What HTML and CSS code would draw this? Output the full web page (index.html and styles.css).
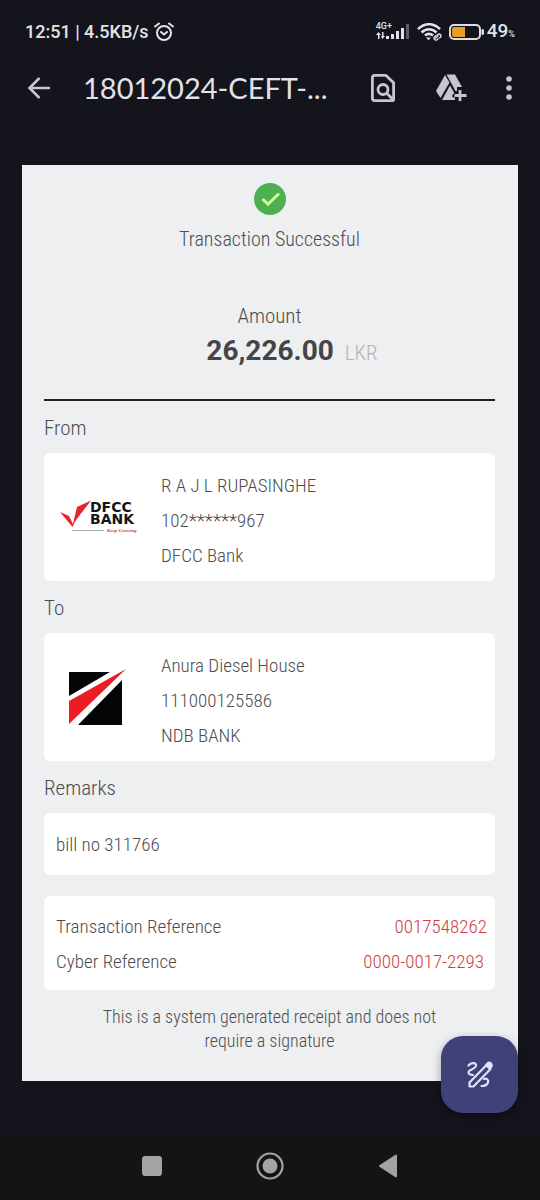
FILE: index.html
```html
<!DOCTYPE html>
<html lang="en">
<head>
<meta charset="utf-8">
<meta name="viewport" content="width=device-width, initial-scale=1">
<title>18012024-CEFT</title>
<link rel="stylesheet" href="styles.css">
</head>
<body>
<div class="status">
  <span class="status-text">12:51 | 4.5KB/s</span>
  <svg class="alarm" width="20" height="20" viewBox="0 0 20 20" fill="none" stroke="currentColor" stroke-width="2" stroke-linecap="round"><circle cx="10" cy="11" r="7"/><path d="M7 10l3 2.500 3-2.500M1 4.500L5 1.500M19 4.500L15 1.500"/></svg>
  <span class="status-right">
    <span class="signal">
      <span class="network">4G+</span>
      <svg width="34" height="16" viewBox="0 0 34 16" fill="currentColor"><path d="M2.500 8L5 11H3.500v4H2v-4H0zM6 8h1.500v4H9l-2.500 3L5 12h1zM10 12h3v3h-3zM15 10h3v5h-3zM20 7h3v8h-3zM25 4h3v11h-3z"/><path opacity=".35" d="M30 0h3v15h-3z"/></svg>
    </span>
    <svg class="wifi" width="26" height="18" viewBox="0 0 26 18" fill="none" stroke="currentColor" stroke-width="2.600"><path d="M1 6.200C7.500-.4 16.500-.4 23 6.200M4.500 9.500c4.500-4.300 10.500-4.300 15 0M8 12.600c2.500-2.200 5.500-2.200 8 0"/><path d="M9 14.500h5l-2.500 2.800z" fill="currentColor" stroke="none"/><path d="M19.500 12.500l1.500-1.200c2-1 4 1.200 2.500 3l-1.500 1M21.500 12.500l-3.500 3M19 12.500l-1.500 1.300c-1.500 2 .5 4 2.500 3l1.500-1.300" stroke-width="1.300"/></svg>
    <svg class="battery" width="35" height="16" viewBox="0 0 35 16"><rect x="1" y="1" width="30" height="14" rx="4" fill="none" stroke="#dedde3" stroke-width="2"/><path d="M5 3h11v10H5a2 2 0 0 1-2-2V5a2 2 0 0 1 2-2z" fill="#e79e28"/><path d="M33 5.500a2 2 0 0 1 0 5z" fill="#dedde3" stroke="#dedde3"/></svg>
    <span class="percent">49<small>%</small></span>
  </span>
</div>

<header class="appbar">
  <button class="icon-btn" aria-label="Back"><svg width="24" height="24" viewBox="0 0 24 24" fill="none" stroke="currentColor" stroke-width="2.600"><path d="M23 12H3M12.500 2L2.500 12l10 10"/></svg></button>
  <h1 class="title">18012024-CEFT-...</h1>
  <button class="icon-btn" aria-label="Find in file"><svg width="24" height="28" viewBox="0 0 24 28" fill="none" stroke="currentColor" stroke-width="2.800" stroke-linejoin="round"><path d="M3.400 1.400H15l7.600 7.300v16.500q0 1.400-1.400 1.400H3.400q-2 0-2-2V3.400q0-2 2-2z"/><circle cx="12" cy="15.500" r="5"/><path d="M15.500 19l6 6"/></svg></button>
  <button class="icon-btn" aria-label="Add to Drive"><svg width="32" height="28" viewBox="0 0 32 28" fill="currentColor"><path d="M10 1l4.500 7.500L5.500 24 1 17zM11.500.5h8.500l7 12.500h-5v4h-1.500zM15 11.500l4 7v1.500h-1.500v3.500h2.500V26H7z"/><path d="M25 16v11M19.500 21.500h12" stroke="currentColor" stroke-width="2.800"/></svg></button>
  <button class="icon-btn" aria-label="More options"><svg width="8" height="24" viewBox="0 0 8 24" fill="currentColor"><circle cx="4" cy="3" r="2.800"/><circle cx="4" cy="12" r="2.800"/><circle cx="4" cy="21" r="2.800"/></svg></button>
</header>

<main class="viewer">
  <article class="receipt">
    <section class="summary">
      <svg class="check" width="32" height="32" viewBox="0 0 32 32"><circle cx="16" cy="16" r="16" fill="#4caf50"/><path d="M8.500 16l5.500 5.200L25 10.500" fill="none" stroke="#ccff90" stroke-width="3"/></svg>
      <p class="result">Transaction Successful</p>
      <p class="amount-label">Amount</p>
      <p class="amount"><strong>26,226.00</strong><span class="currency">LKR</span></p>
    </section>
    <h2 class="label">From</h2>
    <section class="card party">
      <svg class="logo" width="78" height="36" viewBox="0 0 78 36" role="img" aria-label="DFCC Bank">
        <path d="M0 13l9 4 4.500 9-1 2z" fill="#e4252e"/><path d="M12.500 27L17 8l14-6.500C25 10 18 17 12.500 27z" fill="#e4252e"/>
        <text class="logo-name" x="30" y="13">DFCC</text><text class="logo-name" x="30" y="25">BANK</text>
        <path d="M12 31.500h32" stroke="#aaa"/><text class="logo-tag" x="47" y="33">Keep Growing</text>
      </svg>
      <div class="details"><p>R A J L RUPASINGHE</p><p>102******967</p><p>DFCC Bank</p></div>
    </section>
    <h2 class="label">To</h2>
    <section class="card party">
      <svg class="logo" width="78" height="56" viewBox="0 0 78 56" role="img" aria-label="NDB Bank"><path d="M9 3h41L9 27zM62 11v45H18z" fill="#050505"/><path d="M9 32L66 0 9 55z" fill="#ed1c24"/></svg>
      <div class="details"><p>Anura Diesel House</p><p>111000125586</p><p>NDB BANK</p></div>
    </section>
    <h2 class="label">Remarks</h2>
    <section class="card remarks">bill no 311766</section>
    <dl class="card refs">
      <div class="ref"><dt>Transaction Reference</dt><dd>0017548262</dd></div>
      <div class="ref"><dt>Cyber Reference</dt><dd>0000-0017-2293</dd></div>
    </dl>
    <p class="note">This is a system generated receipt and does not<br>require a signature</p>
  </article>
  <button class="fab" aria-label="Annotate"><svg width="28" height="28" viewBox="0 0 28 28" fill="none" stroke="currentColor" stroke-width="2.200" stroke-linecap="round" stroke-linejoin="round"><path d="M2.500 4.500C5 1 11 1.500 10 5S2 8.500 2.500 11.500c.5 2 2.500 2.500 4.500 2.500M18 18c3-1 5 1 4 3.500S18.500 25 15.500 25"/><path d="M3.500 25.500v-4L20.500 4l4 4L7.500 25.500z"/><path d="M20 4l2-2c2-1 4.500 1.500 3.500 3.500l-2 2z" fill="currentColor"/></svg></button>
</main>

<nav class="navbar">
  <button class="nav-btn" aria-label="Recents"><svg width="20" height="20" viewBox="0 0 20 20"><rect width="20" height="20" rx="3" fill="currentColor"/></svg></button>
  <button class="nav-btn" aria-label="Home"><svg width="28" height="28" viewBox="0 0 28 28"><circle cx="14" cy="14" r="12.500" fill="none" stroke="currentColor" stroke-width="2.200"/><circle cx="14" cy="14" r="7.500" fill="currentColor"/></svg></button>
  <button class="nav-btn" aria-label="Back"><svg width="20" height="24" viewBox="0 0 20 24"><path d="M18 1.500v21L2 12z" fill="currentColor" stroke="currentColor" stroke-width="2" stroke-linejoin="round"/></svg></button>
</nav>
</body>
</html>
```
FILE: styles.css
```css
* { box-sizing: border-box; }
body {
  margin: 0;
  min-height: 100vh;
  display: flex;
  flex-direction: column;
  background: #13141c;
  color: #e4e2e9;
  font-family: "Roboto Condensed", Roboto, sans-serif;
}
p, h1, h2, dl, dd { margin: 0; }
svg { display: block; flex: none; }
button { padding: 0; border: 0; background: none; color: inherit; }

.status {
  display: flex;
  align-items: center;
  height: 64px;
  padding: 0 25px;
  font: 500 18px/24px Roboto, sans-serif;
}
.alarm { margin-left: 5px; }
.status-right { display: flex; align-items: center; margin-left: auto; }
.signal { position: relative; }
.network { position: absolute; left: 0; top: -3px; font-size: 9px; line-height: 10px; }
.wifi { margin-left: 7px; }
.battery { margin-left: 6px; }
.percent { margin-left: 3px; font-size: 19px; }
.percent small { font-size: 9px; }

.appbar {
  display: flex;
  align-items: center;
  height: 48px;
  padding: 0 27px;
  color: #c8c5d0;
}
.title {
  flex: 1;
  margin-left: 32px;
  white-space: nowrap;
  font: 400 29px/40px Lato, sans-serif;
  color: #e4e2e9;
}
.icon-btn + .icon-btn { margin-left: 40px; }
.icon-btn:last-child { margin-left: 38px; }

.viewer { position: relative; margin: 53px 22px 54px; }
.receipt {
  padding: 18px 23px 28px 22px;
  background: #edeff1;
  color: #4d4d50;
  font-size: 19px;
  font-weight: 300;
}
.summary {
  display: flex;
  flex-direction: column;
  align-items: center;
  height: 218px;
  border-bottom: 2px solid #222;
}
.result { margin-top: 12px; font-size: 20px; line-height: 24px; }
.amount-label { margin-top: 53px; font-size: 21px; line-height: 24px; }
.amount { display: flex; align-items: baseline; gap: 11px; margin: 5px 0 0 45px; line-height: 36px; }
.amount strong { font: 700 28px/36px Roboto, sans-serif; color: #454547; }
.currency { font-size: 21px; color: #b4b4b8; }
.label { height: 52px; font-size: 21px; line-height: 54px; font-weight: 300; }
.card { border-radius: 6px; background: #fff; }
.party { display: flex; align-items: center; gap: 23px; height: 128px; padding-left: 16px; }
.details { display: grid; gap: 11px; padding-top: 7px; line-height: 24px; }
.logo-name { font: 700 14px "DejaVu Sans", sans-serif; fill: #161616; }
.logo-tag { font: italic 700 5px "Liberation Serif", serif; fill: #c4454b; }
.remarks { padding: 1px 12px 0; line-height: 61px; }
.refs { display: grid; gap: 11px; margin-top: 21px; padding: 19px 8px 16px 12px; line-height: 24px; }
.ref { display: flex; justify-content: space-between; }
.ref dd { color: #d33a44; }
.ref:last-child dd { margin-right: 3px; }
.note { margin-top: 15px; text-align: center; font-size: 18px; line-height: 24px; }

.fab {
  position: absolute;
  right: 0;
  bottom: -32px;
  display: grid;
  place-items: center;
  width: 77px;
  height: 77px;
  border-radius: 22px;
  background: #3f4178;
  color: #e1e0ff;
  box-shadow: 0 3px 8px rgba(0, 0, 0, .35);
}
.navbar {
  flex: 1;
  display: flex;
  align-items: center;
  justify-content: center;
  gap: 94px;
  min-height: 64px;
  padding-bottom: 3px;
  background: #141415;
  color: #a3a3a3;
}
```
